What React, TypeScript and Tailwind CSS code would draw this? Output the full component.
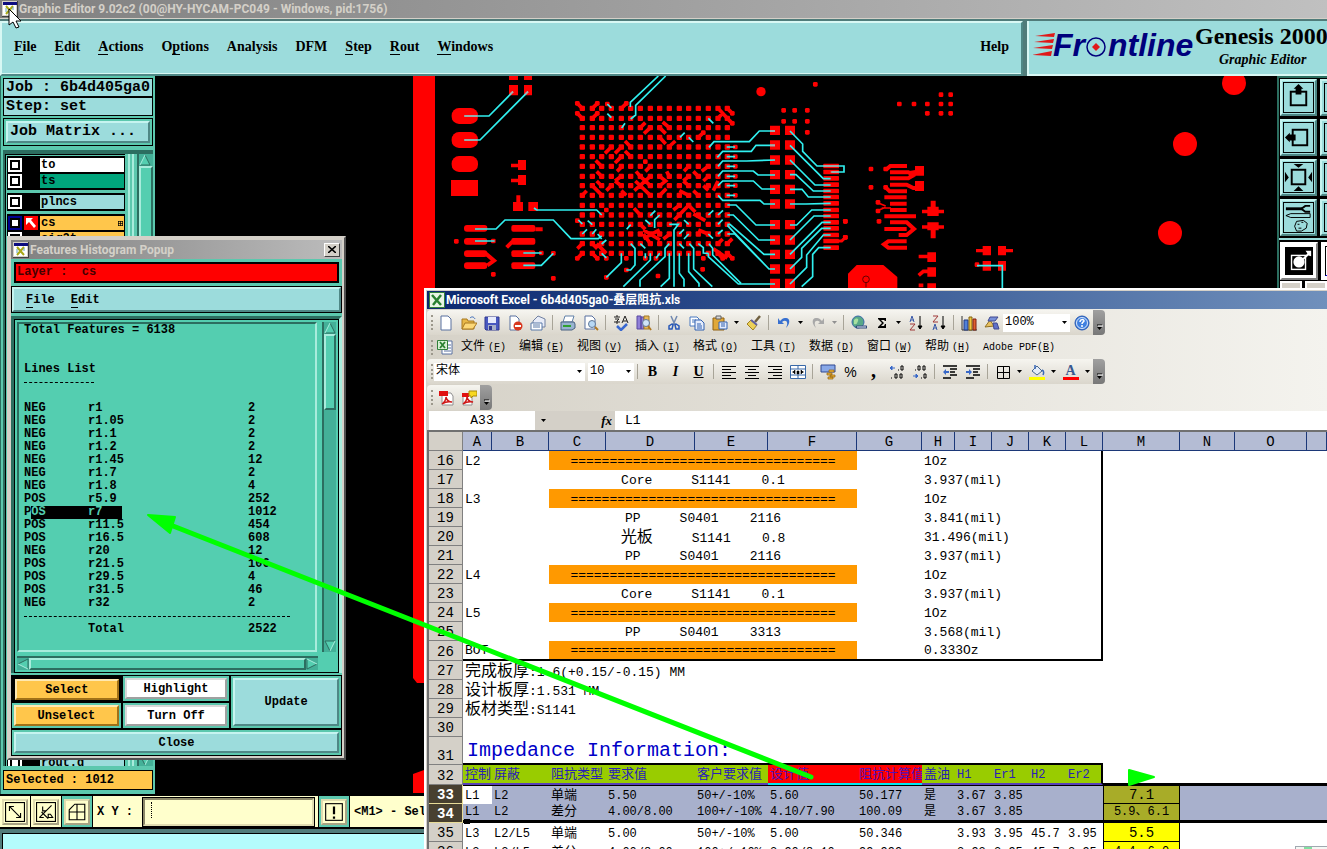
import { ReactNode } from 'react'
import clsx from 'clsx'

const mono = "font-['Liberation_Mono','Noto_Sans_CJK_SC',monospace]"
const serif = "font-['Liberation_Serif',serif]"
const caption = "font-['Roboto','Noto_Sans_CJK_SC',sans-serif]"

const raised =
  'border-2 border-t-[#c6f4f0] border-l-[#c6f4f0] border-b-[#4f8886] border-r-[#4f8886]'
const teal =
  'border-2 border-t-[#a8ecdc] border-l-[#a8ecdc] border-b-[#2c6e60] border-r-[#2c6e60]'

/* ---------- Genesis main window ---------- */

const AppIcon = () => (
  <svg width="16" height="16" viewBox="0 0 16 16" className="shrink-0">
    <rect width="16" height="16" fill="#404040" />
    <rect width="15" height="15" fill="#d4d0c8" />
    <rect x="1" y="1" width="14" height="3" fill="#0c0c80" />
    <rect x="1" y="4" width="13" height="10" fill="#fff" />
    <path d="M4 5l7 8M11 5l-7 8" stroke="#a8a818" strokeWidth="2" />
    <path d="M4 7v4M11 6v3" stroke="#60a0c0" />
  </svg>
)

const menuItems = [
  ['', 'F', 'ile'],
  ['', 'E', 'dit'],
  ['', 'A', 'ctions'],
  ['O', 'p', 'tions'],
  ['Analysis', '', ''],
  ['DFM', '', ''],
  ['', 'S', 'tep'],
  ['', 'R', 'out'],
  ['', 'W', 'indows'],
]

const Hot = ({ parts }: { parts: string[] }) => (
  <>
    {parts[0]}
    <span className="border-b border-black">{parts[1]}</span>
    {parts[2]}
  </>
)

const FrontlineLogo = () => (
  <svg width="162" height="34" viewBox="0 0 162 34" className="shrink-0">
    <g fill="#e01818">
      <path d="M2 7l20-3-1 4zM1 13l20-3-1 4zM0 19l20-3-1 4zM-1 26l20-4-1 5z" />
    </g>
    <g
      fill="#00007c"
      fontFamily="Liberation Sans"
      fontWeight="bold"
      fontStyle="italic"
      fontSize="32"
    >
      <text x="20" y="27">Fr</text>
      <text x="75" y="27">ntline</text>
    </g>
    <circle cx="63" cy="18" r="9" fill="#9cdcdc" stroke="#00007c" strokeWidth="1.500" />
    <path d="M63 14l4 4-4 4-4-4z" fill="#e01818" />
  </svg>
)

const Header = () => (
  <header className="flex h-[57px] shrink-0 border-t-2 border-[#507c7a] bg-[#507c7a]">
    <nav
      className={clsx(
        'flex flex-1 items-center gap-[18px] border-2 border-[#d8f8f4] border-r-[#4f8886] border-b-[#4f8886] bg-[#9cdcdc] px-3 pb-1 text-sm font-bold shadow-[inset_0_-1px_0_#d8f8f4]',
        serif,
      )}
    >
      {menuItems.map((item) => (
        <button key={item.join('')} className="leading-4">
          <Hot parts={item} />
        </button>
      ))}
      <button className="ml-auto leading-4">Help</button>
    </nav>
    <div className="ml-1 flex w-[300px] items-center overflow-hidden border-b-2 border-l-2 border-[#d8f8f4] bg-[#9cdcdc] pb-[3px] pl-1">
      <FrontlineLogo />
      <div className={clsx('whitespace-nowrap font-bold', serif)}>
        <div className="text-2xl leading-7">Genesis 2000</div>
        <div className="pl-6 text-sm italic">Graphic Editor</div>
      </div>
    </div>
  </header>
)

interface LayerProps {
  name: string
  color: string
  active?: boolean
}

const Layer = ({ name, color, active }: LayerProps) => (
  <label className="flex h-4 border-y border-black bg-black">
    <span
      className={clsx(
        'flex w-[14px] items-center justify-center',
        active ? 'bg-[#000090]' : 'bg-white',
      )}
    >
      <input
        type="checkbox"
        className="size-[10px] appearance-none border-2 border-black bg-white"
      />
    </span>
    <span className="w-[18px] pl-[2px]">
      {active && (
        <svg width="14" height="14" viewBox="0 0 14 14">
          <rect width="14" height="14" fill="#f00" />
          <path d="M2 2h7l-2 2 5 6-2 2-5-6-3 3z" fill="#fff" />
        </svg>
      )}
    </span>
    <span className={clsx('flex flex-1 items-center justify-between pr-px pl-px leading-3', color)}>
      {name}
      {active && (
        <svg width="5" height="5" viewBox="0 0 5 5" stroke="#000" fill="none">
          <path d="M0 .5h5M0 2.500h5M0 4.500h5M.5 0v5M2.500 0v5M4.500 0v5" strokeWidth=".7" />
        </svg>
      )}
    </span>
  </label>
)

const Sidebar = () => (
  <aside
    className={clsx(
      'flex w-[155px] shrink-0 flex-col border-l border-[#2c6e60] bg-[#5cc8ae] px-[2px] pt-[2px] font-bold',
      mono,
    )}
  >
    <div className="h-[19px] border border-black bg-[#9cdcdc] pl-[2px] text-[15px] leading-[17px]">
      Job : 6b4d405ga0
    </div>
    <div className="h-[19px] border border-black bg-[#9cdcdc] pl-[2px] text-[15px] leading-[17px]">
      Step: set
    </div>
    <div className="mt-[2px] border border-black p-[2px]">
      <button
        className={clsx('block h-[22px] w-full bg-[#9cdcdc] pl-[2px] text-left text-[15px] leading-[18px]', raised)}
      >
        Job Matrix ...
      </button>
    </div>
    <div className="mt-1 flex min-h-0 flex-1 gap-[3px] overflow-hidden border-t-4 border-l-2 border-[#2c6e60] text-xs">
      <div className="flex w-[120px] flex-col border-t border-l border-black pt-px pl-px">
        <div className="border border-black">
          <Layer name="to" color="bg-white" />
          <Layer name="ts" color="bg-[#00a57c]" />
        </div>
        <div className="mt-[3px] border border-black">
          <Layer name="plncs" color="bg-[#9cdcdc]" />
        </div>
        <div className="mt-[3px] border border-black">
          <Layer name="cs" color="bg-[#ffc64b]" active />
          <Layer name="sig2t" color="bg-[#ffc64b]" />
        </div>
        <div className="mt-auto h-3 overflow-hidden border border-b-0 border-black">
          <Layer name="rout.d" color="bg-[#9cdcdc]" />
        </div>
      </div>
      <div className="w-[6px] border-x-2 border-[#a8ecdc] bg-[#5cc8ae]" />
      <div className="flex flex-1 flex-col border-l-2 border-[#2c6e60] bg-[#44b098]">
        <ArrowHead dir="up" />
        <div className={clsx('flex-1 bg-[#54ceb0]', teal)} />
        <ArrowHead dir="down" />
      </div>
    </div>
    <div className="my-[4px] h-5 border border-black bg-[#ffc64b] pl-[2px] text-xs leading-[18px]">
      Selected : 1012
    </div>
  </aside>
)

const arrowRotation = {
  up: 'rotate-0',
  right: 'rotate-90',
  down: 'rotate-180',
  left: '-rotate-90',
}

const ArrowHead = ({ dir }: { dir: keyof typeof arrowRotation }) => (
  <svg width="12" height="12" viewBox="0 0 12 12" className={clsx('shrink-0', arrowRotation[dir])}>
    <rect width="12" height="12" fill="#44b098" />
    <path d="M6 1l5 10H1z" fill="#54ceb0" />
    <path d="M6 1l5 10H1" fill="none" stroke="#2c6e60" />
    <path d="M6 1L1 11" stroke="#a8ecdc" />
  </svg>
)

/* ---------- board drawing ---------- */

const bgaX = [517, 547, 575, 604, 634, 662, 691, 721, 749, 778, 808, 836, 865, 895, 924, 952]
const bgaY = [115, 145, 173, 202, 231, 260, 289, 319, 347, 376, 406, 435, 463, 492, 521, 550]
const padY = [181, 225, 270, 314, 358, 402, 464, 510, 553, 597, 640]
const finY = [288, 306, 325, 344, 363, 381, 400, 420, 438, 457, 475, 495, 513, 533]

const vias = [
  [139, 514], [250, 513], [250, 613], [394, 549], [430, 550], [430, 625], [589, 622],
  [649, 600], [744, 618], [878, 598], [1216, 43], [1121, 121], [1154, 121], [1192, 121],
  [1121, 154], [1154, 154], [1192, 154], [1192, 187], [1306, 454], [1306, 502],
  [502, 100], [562, 100], [592, 102], [649, 100], [502, 130], [562, 130], [967, 130],
  [967, 160], [880, 188], [706, 275], [502, 565], [562, 565], [589, 565], [649, 565],
  [706, 565], [738, 565], [880, 565], [938, 565], [967, 565], [502, 452], [589, 420],
  [976, 231], [976, 260], [976, 289], [976, 319], [976, 347], [976, 376],
]

const dogbones =
  'M502 100l15 15M547 115l15-15M502 130l15 15M547 145l15-15M634 115l15-15M924 115l28 30M952 115l15 15M924 145l14-15M952 145l15 15' +
  'M691 173l15-15M702 191l19-18M758 156l20 17M749 173l18 18M749 202l18 20M776 231l20-18M865 202l15-14M645 213l17 18M585 250l19-19M615 250l19-19M615 279l19-19M645 243l17 17' +
  'M557 271l18 18M621 304l15-15M560 304l15 15M678 304l13 15M706 304l15-15M822 304l14-15M875 304l20-15M850 304l15 15M770 304l8 15M560 333l15 15M615 333l19-14M615 333l19 14' +
  'M673 362l48-43M676 333l45 43M691 319l30 28M749 319l18 14-18 14M820 333l16-14M820 333l16 14M880 333l15-14M850 362l15 14M880 347l15 14' +
  'M530 362l-13 14M547 347l29 29M589 362l15-15M634 362l15 14M749 376l20-20M808 362l28 14M910 362l14-29M672 415l19 20M790 420l18-14M793 450l43-44M836 406l20 20M850 432l36 20' +
  'M691 463l15 15M700 480l50 30M700 505l49-25M700 492l21 29M760 507l20-15M865 480l30 12M924 521l14-14M952 521l15-15' +
  'M502 536l15-15M547 521l15 15M502 565l15-15M547 550l15 15M560 521l29 29M910 536l42 29M924 550l14 15M952 550l15 15'

const tracks =
  'M163 138H237L309 65M163 210H210L354 65M372 414l8 6H560l15 15M195 477H258l27-27H430l53 56H565l10-8M195 513h59M340 549h55M340 586h54l36-36' +
  'M745 18L661 97v14M767 18L677 106v29l-15 12M645 160l-10 14M592 102l12 12M592 131l12 12M895 145l15 15M810 202l14-14M836 202l14 14' +
  'M897 232l15-17H1018l30-32H1095M922 262l16-18H1024l14-18H1095M924 289l14-16H1010l85-3M924 319l14-16H1030l14 12H1095M924 347l14-14H1030l26 24H1095M924 376l14 15H1050l12 11H1095' +
  'M952 405h26l60 60H1095M952 435h18l76 75H1095M952 463h8l102 90H1095M952 466l125 131H1095M952 492h22l103 105M895 550v10l90 82H1095M897 521l11 14v20l85 85' +
  'M950 231h25M950 260h25M950 289h25M950 319h25M950 347h25M950 376h25' +
  'M1140 183l38 39v22l43 44H1302v18h-37M1140 226l100 100h22M1140 270l75 75h47M1140 314h18l52 49h52M1140 358h36l19 23h67M1140 402h48l74-2M1140 465h20l45-45h57M1140 510l72-72h50' +
  'M1140 553l96-96h26M1140 597l35-35v-27l60-60h27M1140 642l50-50v-37l50-60h22M1175 650l33-30v-67l18-20h36' +
  'M589 622l45-44v-28M649 600h13l13-15v-50l-13-14M640 650l81-80v-20M690 650v-20l75-70v-25l13-14M752 650l26-25v-75M792 650V480l13-17H778M808 550v60l14 18v22M836 550v55l31 35v10M838 521l13 14v62l56 53M865 521l15 12v16l15 1' +
  'M505 450l12 12M533 452l14 12M517 492l14-14M547 492l12-14M575 507l-12-15M589 510l-14 12M575 550l14 14M650 478l12-14M706 450l15 13M721 437l15-15M749 435l-15 14v25M691 521l15 14M706 550v15M738 565l11-15M895 435l15-14M924 435l15-14M924 463l14-14M895 492l14 14M924 492l14-12M822 450l14 13M808 492l14-14M822 507l14-15M808 521l14 14'

const Board = () => (
  <svg className="min-w-0 flex-1 bg-black" fill="#f00">
    <path d="M258 0h22v607h-18l-4-5zM280 690v27h-22v-19z" />
    <g transform="translate(255 -6) scale(.33333)">
      <path d="M297 18h27v12h-27zM342 18h24v12h-24zM297 45h27v31h-27zM342 45h24v31h-24zM123 330h81v48h-81zM324 270h24v30h-24zM303 281h21v11h-21zM324 315h24v30h-24zM303 326h21v11h-21zM309 396h30v27h-30zM319 376h12v20h-12zM355 396h29v27h-29z" />
      {[114, 186, 258].map((y) => (
        <rect key={y} x="125" y={y} width="79" height="48" rx="22" />
      ))}
      {[465, 504, 541, 577].map((y) => (
        <g key={y}>
          <rect x="162" y={y} width="70" height="20" rx="9" />
          <rect x="304" y={y} width="72" height="20" rx="6" />
        </g>
      ))}
      <path d="M228 551l24 21-20 14M290 532l18-18M376 478h22" stroke="#f00" strokeWidth="12" fill="none" />
      <circle cx="1053" cy="65" r="14" />
      {vias.map(([x, y]) => (
        <rect key={`${x}-${y}`} x={x - 7} y={y - 7} width="14" height="14" rx="4" />
      ))}
      {bgaY.map((y) =>
        bgaX.map((x) => (
          <rect key={`${x}-${y}`} x={x - 8} y={y - 8} width="16" height="16" rx="3" />
        )),
      )}
      <path d={dogbones} stroke="#f00" strokeWidth="11" fill="none" />
      {padY.map((y) => (
        <path key={y} d={`M1080 ${y - 14}h30v28h-30zM1125 ${y - 14}h30v28h-30z`} />
      ))}
      {finY.map((y) => (
        <rect key={y} x="1240" y={y - 7} width="47" height="14" rx="2" />
      ))}
      <path d="M1287 513h8l11-11" stroke="#f00" strokeWidth="9" fill="none" />
      <path d={tracks} stroke="#30f0f0" strokeWidth="5" fill="none" />
      <path d="M163 138h38M163 210h38M301 72l8-7M346 72l8-7M1080 183h15M1080 226h15M1240 288h46M1262 306h24" stroke="#b0a8a8" strokeWidth="5" fill="none" />
    </g>
    <g transform="translate(685 -76) scale(.33333)">
      <circle cx="1182" cy="249" r="36" />
      <circle cx="1035" cy="432" r="36" />
      <circle cx="990" cy="699" r="36" />
      {[
        [178, 312], [222, 312], [262, 312], [303, 312], [332, 312], [303, 284], [332, 284],
        [262, 340], [303, 340], [332, 340], [93, 507], [93, 562], [114, 607], [114, 633],
        [117, 664], [16, 664], [16, 712], [411, 794], [137, 507], [137, 562],
      ].map(([x, y]) => (
        <rect key={`${x}-${y}`} x={x - 7} y={y - 7} width="14" height="14" rx="4" />
      ))}
      <path
        d="M137 510l14-12h50M150 517h55l20 10M150 535h55l20-12M150 554h50l20 10h20M137 562l12 12h52M133 592h67M150 611h50M150 630h50M133 649h95M150 667h50l22 20-22 18h-24M133 687h67M200 724h-55l-13 9 13 10h56M205 520l35-6"
        stroke="#f00"
        strokeWidth="12"
        fill="none"
      />
      <path d="M117 610l20 8M117 630l20-8M125 624h28" stroke="#f00" strokeWidth="5" />
      <path d="M225 498h27v29h-27zM225 543h27v30h-27zM246 629h66v11h-66zM272 602h15v46h-15zM262 620h34v28h-34zM246 676h66v10h-66zM272 667h15v48h-15zM262 667h34v24h-34z" />
      <path d="M408 747h22v10h-22zM428 738h25v28h-25zM474 738h24v28h-24zM498 747h21v10h-21zM428 783h25v29h-25zM474 783h24v29h-24zM262 757h26v29h-26zM236 764h28v11h-28zM262 802h26v28h-26zM262 850h26v14h-26z" />
      <path d="M236 826l14-12h14M236 856h14" stroke="#f00" strokeWidth="11" fill="none" />
      <path d="M50 795h80l42 36v40H24v-50z" />
      <circle cx="78" cy="838" r="10" fill="none" stroke="#600" strokeWidth="3" />
      <path d="M78 848v14" stroke="#600" strokeWidth="3" />
      <path d="M411 797h76v70" stroke="#30f0f0" strokeWidth="5" fill="none" />
    </g>
  </svg>
)

const toolDrawings: ReactNode[] = [
  <>
    <rect x="8" y="10" width="16" height="14" fill="none" stroke="#000" strokeWidth="2" />
    <path d="M16 2l5 5h-2v6h-6V7h-2z" />
  </>,
  <>
    <rect x="10" y="8" width="15" height="16" fill="none" stroke="#000" strokeWidth="2" />
    <path d="M2 16l5-5v2h6v6H7v2z" />
  </>,
  <>
    <rect x="9" y="8" width="14" height="15" fill="none" stroke="#000" strokeWidth="2" />
    <path d="M11 2h10l-5 4zM11 30h10l-5-5zM2 10v11l4-5zM30 10v11l-4-5z" />
  </>,
  <>
    <path d="M3 7h17" stroke="#000" strokeWidth="3" />
    <path d="M28 4h-5l-4 3 4 3h5" fill="none" stroke="#000" strokeWidth="2" />
    <path d="M8 12h20v4H8l-5-2z" fill="none" stroke="#000" />
    <path
      d="M14 20l7-1 4 3-1 5-5 3h-5l-2-5zM15 23h2M19 21h2M16 27h3"
      fill="none"
      stroke="#000"
    />
  </>,
]

const ToolPalette = () => (
  <div className="flex w-[50px] shrink-0 flex-col overflow-hidden border-t-2 border-l-2 border-[#2c6e60] bg-black">
    {toolDrawings.map((drawing, i) => (
      <div key={i} className="flex h-10 w-[90px] gap-[3px] pt-px pb-[2px] pl-px">
        <button className={clsx('flex size-[37px] items-center justify-center bg-[#9cdcdc]', raised)}>
          <svg width="31" height="31" viewBox="0 0 32 32">
            <rect x=".5" y=".5" width="31" height="31" fill="none" stroke="#000" />
            {drawing}
          </svg>
        </button>
        <button className={clsx('size-[37px] bg-[#9cdcdc] p-[2px]', raised)}>
          <span className="block h-full border border-black" />
        </button>
      </div>
    ))}
    <div className="flex h-[43px] w-[90px] gap-[3px] border-t-2 border-[#9cdcdc] pt-[2px] pl-px">
      <button className="flex size-[38px] items-center justify-center border-2 border-white border-r-[#808080] border-b-[#808080] bg-white">
        <svg width="28" height="28" viewBox="0 0 30 30">
          <rect width="30" height="30" />
          <rect x="7" y="9" width="15" height="15" fill="none" stroke="#fff" strokeWidth="1.500" />
          <circle cx="15" cy="16" r="6" fill="#fff" />
          <path d="M19 12l5-5-2-3h6v6l-3-1-5 5z" fill="#fff" />
        </svg>
      </button>
      <button className="size-[38px] bg-white p-1">
        <span className="block h-full border border-black border-b-[#0000e0]" />
      </button>
    </div>
    <div className="flex flex-1 gap-[3px] pl-px">
      <div className="w-[37px] border-2 border-white bg-[#d4d0c8]" />
      <div className="w-[37px] border-2 border-white bg-[#d4d0c8]" />
    </div>
  </div>
)

const CreamButton = ({ green, children }: { green?: boolean; children: ReactNode }) => (
  <button
    className={clsx(
      'flex h-[31px] w-[31px] items-center justify-center border-r border-black',
      green ? 'bg-[#5cc8ae]' : 'bg-[#ffffcc]',
    )}
  >
    <span className="flex size-[26px] items-center justify-center border-2 border-[#e0dcb0] border-r-[#a8a484] border-b-[#a8a484] bg-[#ffffcc]">
      <svg width="20" height="20" viewBox="0 0 18 18" fill="none" stroke="#000">
        {children}
      </svg>
    </span>
  </button>
)

const CommandBar = () => (
  <footer className={clsx('shrink-0 bg-[#507c7a] font-bold', mono)}>
    <div className="flex h-[35px] items-center border-y-2 border-black bg-[#ffffcc] text-xs">
      <CreamButton>
        <rect x=".5" y=".5" width="17" height="17" />
        <path d="M4 4l10 10M4 8V4h4M14 10v4h-4" />
      </CreamButton>
      <CreamButton>
        <rect x=".5" y=".5" width="17" height="17" />
        <path d="M3 14L14 3M3 14h4M6 4v4h3M11 11h2l2 3h-4zM5 9l6 6" />
      </CreamButton>
      <CreamButton green>
        <path d="M7 2h9v14H2V7zM2 9h14M9 2v14" />
      </CreamButton>
      <label htmlFor="xy" className="w-[50px] pl-1 whitespace-pre">
        X Y :
      </label>
      <span className="relative">
        <input
          id="xy"
          className="block h-[28px] w-[171px] border-2 border-[#8c8868] border-r-[#e0dcb0] border-b-[#e0dcb0] bg-[#ffffcc] px-1 outline outline-black"
        />
        <span className="absolute top-1 left-2 h-4 border-l border-dotted border-black" />
      </span>
      <span className="ml-1 border-l border-black">
        <CreamButton green>
          <rect x="1.500" y="1.500" width="15" height="15" />
          <path d="M9 4v7M9 13v2" strokeWidth="2" />
        </CreamButton>
      </span>
      <span className="pl-1 whitespace-pre">{'<M1> - Select'}</span>
    </div>
    <div className="mt-1 ml-[2px] h-[16px] border-t border-l border-black bg-[#b4fcfc]" />
  </footer>
)

/* ---------- histogram popup ---------- */

const lineRows = [
  ['NEG', 'r1', '2'],
  ['NEG', 'r1.05', '2'],
  ['NEG', 'r1.1', '2'],
  ['NEG', 'r1.2', '2'],
  ['NEG', 'r1.45', '12'],
  ['NEG', 'r1.7', '2'],
  ['NEG', 'r1.8', '4'],
  ['POS', 'r5.9', '252'],
  ['POS', 'r7', '1012'],
  ['POS', 'r11.5', '454'],
  ['POS', 'r16.5', '608'],
  ['NEG', 'r20', '12'],
  ['POS', 'r21.5', '106'],
  ['POS', 'r29.5', '4'],
  ['POS', 'r31.5', '46'],
  ['NEG', 'r32', '2'],
]

const HistogramTable = () => (
  <table className="table-fixed">
    <colgroup>
      <col className="w-16" />
      <col className="w-40" />
      <col className="w-16" />
    </colgroup>
    <tbody>
      {lineRows.map(([sign, size, count]) => (
        <tr key={size} className="h-[13px]">
          {size === 'r7' ? (
            <>
              <td className="p-0">
                <div className="flex h-[13px]">
                  P<span className="flex-1 bg-black text-[#54ceb0]">OS</span>
                </div>
              </td>
              <td className="p-0">
                <div className="h-[13px] w-[34px] bg-black text-[#54ceb0]">r7</div>
              </td>
            </>
          ) : (
            <>
              <td className="p-0">{sign}</td>
              <td className="p-0">{size}</td>
            </>
          )}
          <td className="p-0">{count}</td>
        </tr>
      ))}
      <tr>
        <td colSpan={3} className="p-0">
          <div className="my-[6px] w-[266px] border-t border-dashed border-black" />
        </td>
      </tr>
      <tr>
        <td className="p-0" />
        <td className="p-0">Total</td>
        <td className="p-0">2522</td>
      </tr>
    </tbody>
  </table>
)

const orangeButton =
  'block h-[21px] w-full border-2 border-[#ffe8b0] border-r-[#a07018] border-b-[#a07018] bg-[#ffc64b] leading-4'
const whiteButton =
  'block h-[21px] w-full border-2 border-[#d8d8d8] border-r-[#a0a0a0] border-b-[#a0a0a0] bg-white leading-4'

const HistogramPopup = () => (
  <section className="absolute top-[236px] left-[7px] w-[339px] border-2 border-[#d4d0c8] border-r-[#505050] border-b-[#505050] bg-[#d4d0c8] p-[2px]">
    <div
      className={clsx(
        'flex h-[19px] items-center bg-linear-to-r from-[#808080] to-[#bcbcbc] pl-[2px] text-xs font-bold text-[#d4d0c8]',
        caption,
      )}
    >
      <AppIcon />
      <h2 className="pl-px">Features Histogram Popup</h2>
      <button
        aria-label="Close"
        className="mr-[2px] ml-auto flex h-[14px] w-4 items-center justify-center border border-white border-r-[#404040] border-b-[#404040] bg-[#d4d0c8]"
      >
        <svg width="8" height="7" viewBox="0 0 8 7" stroke="#000" strokeWidth="1.600">
          <path d="M0 0l8 7M8 0L0 7" />
        </svg>
      </button>
    </div>
    <div className={clsx('bg-[#5cc8ae] text-xs font-bold', mono)}>
      <div className="px-[3px] pt-[3px]">
        <div className="h-[21px] border-2 border-black bg-[#f00] pl-px leading-[17px] whitespace-pre text-[#400]">
          Layer :  cs
        </div>
      </div>
      <div className="mt-[3px] border border-black">
        <div className={clsx('flex h-[25px] items-center gap-4 bg-[#9cdcdc] pl-3', raised)}>
          <button className="leading-[14px]">
            <Hot parts={['', 'F', 'ile']} />
          </button>
          <button className="leading-[14px]">
            <Hot parts={['', 'E', 'dit']} />
          </button>
        </div>
      </div>
      <div className="mt-[3px] border-x-[3px] border-t-[3px] border-[#2c6e60] border-r-[#a8ecdc]">
        <div className="border border-black bg-[#54ceb0] p-[2px]">
          <div className="flex gap-[5px]">
            <div className="h-[330px] min-w-0 flex-1 border-2 border-[#2c6e60] border-r-[#a8ecdc] border-b-[#a8ecdc] pl-[5px] leading-[13px]">
              <p>Total Features = 6138</p>
              <p className="mt-[26px]">Lines List</p>
              <div className="mt-[6px] mb-[19px] w-[70px] border-t border-dashed border-black" />
              <HistogramTable />
            </div>
            <div className="flex w-[14px] flex-col border-l-2 border-[#2c6e60] bg-[#44b098]">
              <ArrowHead dir="up" />
              <div className={clsx('h-[76px] bg-[#54ceb0]', teal)} />
              <div className="mt-auto h-3">
                <ArrowHead dir="down" />
              </div>
            </div>
          </div>
          <div className="mt-1 mr-[18px] flex h-[14px] border-t-2 border-[#2c6e60] bg-[#44b098]">
            <ArrowHead dir="left" />
            <div className={clsx('flex-1 bg-[#54ceb0]', teal)} />
            <ArrowHead dir="right" />
          </div>
        </div>
      </div>
      <div className="mt-[2px] grid grid-cols-3 border border-black">
        <div className="border-2 border-black bg-black p-px">
          <button className={orangeButton}>Select</button>
        </div>
        <div className="border-r-2 border-b-2 border-l border-black p-[2px]">
          <button className={whiteButton}>Highlight</button>
        </div>
        <div className="row-span-2 p-[2px]">
          <button className={clsx('h-full w-full bg-[#9cdcdc]', raised)}>Update</button>
        </div>
        <div className="border-r border-black p-[2px]">
          <button className={orangeButton}>Unselect</button>
        </div>
        <div className="border-r-2 border-l border-black p-[2px]">
          <button className={whiteButton}>Turn Off</button>
        </div>
        <div className="col-span-3 border-t-2 border-black p-[2px]">
          <button className={clsx('block h-[21px] w-full bg-[#9cdcdc] leading-4', raised)}>Close</button>
        </div>
      </div>
    </div>
  </section>
)

/* ---------- Excel window ---------- */

const icons: Record<string, ReactNode> = {
  New: <path d="M3 1h7l3 3v11H3z" fill="#fff" stroke="#5870a0" />,
  Open: (
    <>
      <path d="M1 4h5l1 2h6v8H1z" fill="#e8b848" stroke="#a87820" />
      <path d="M4 8h12l-4 6H1z" fill="#fcd878" stroke="#a87820" />
      <path d="M9 3c2-2 4-1 5 1" fill="none" stroke="#3868b8" />
    </>
  ),
  Save: (
    <>
      <path d="M1 2h14v13H2l-1-1z" fill="#4858c0" stroke="#303890" />
      <path d="M4 2h8v6H4z" fill="#e8ecfc" />
      <path d="M4 10h8v5H4z" fill="#a8b0c8" />
      <path d="M5 11h3v4H5z" fill="#303890" />
    </>
  ),
  Permission: (
    <>
      <path d="M3 1h6l3 3v11H3z" fill="#fff" stroke="#5870a0" />
      <circle cx="11" cy="11" r="4.500" fill="#d83820" />
      <path d="M8 11h6" stroke="#fff" strokeWidth="2" />
    </>
  ),
  Mail: (
    <>
      <path d="M3 6l5-5 7 3v8H3z" fill="#e8ecf8" stroke="#7080a0" />
      <path d="M1 8h11v7H1zM3 10h7M3 12h7" fill="#fff" stroke="#5878a8" />
    </>
  ),
  Print: (
    <>
      <path d="M5 1h9l-2 6H3z" fill="#fff" stroke="#6080a8" />
      <path d="M1 7h13l1 2v4l-3 2H1z" fill="#98b4d0" stroke="#486080" />
      <path d="M3 11h8" stroke="#30a030" strokeWidth="2" />
    </>
  ),
  Preview: (
    <>
      <path d="M2 1h7l3 3v10H2z" fill="#fff" stroke="#5870a0" />
      <circle cx="9" cy="9" r="3.500" fill="#b8d8f4" stroke="#607898" />
      <path d="M12 12l3 3" stroke="#b07820" strokeWidth="2" />
    </>
  ),
  Spelling: (
    <>
      <path d="M1 2h6M4 0v2M2 4h4L4 6v3M1 7h6M9 8l3-7 3 7M10 6h4" fill="none" stroke="#202020" />
      <path d="M4 11l4 4 6-6" fill="none" stroke="#3868d0" strokeWidth="2.500" />
    </>
  ),
  Research: (
    <>
      <path d="M1 1h4v13H1zM5 2h3v12H5z" fill="#9080d8" stroke="#5848a0" />
      <path d="M8 1h5v13H8z" fill="#e8b858" stroke="#a07828" />
      <circle cx="10" cy="8" r="3.500" fill="#d0e4f8" stroke="#607898" />
      <path d="M12 11l3 4" stroke="#b07820" strokeWidth="2" />
    </>
  ),
  Cut: (
    <>
      <path d="M5 1l4 9M11 1L7 10" stroke="#7088b0" strokeWidth="1.500" />
      <path d="M6 9l-3 2v3h3l1-4zM10 9l3 2v3h-3l-1-4z" fill="none" stroke="#2858b8" strokeWidth="1.500" />
    </>
  ),
  Copy: (
    <>
      <path d="M1 2h7l2 2v7H1zM3 5h4M3 7h4" fill="#fff" stroke="#4878c0" />
      <path d="M6 5h6l3 3v7H6zM8 9h4M8 11h5M8 13h5" fill="#e4ecfc" stroke="#3060b0" />
    </>
  ),
  Paste: (
    <>
      <path d="M1 3h11v12H1z" fill="#e0a838" stroke="#906010" />
      <path d="M4 1h5v3H4z" fill="#d8d8d8" stroke="#606060" />
      <path d="M7 7h8v7H7zM9 9h4M9 11h4" fill="#e4ecfc" stroke="#3060b0" />
    </>
  ),
  Painter: (
    <>
      <path d="M14 1l-5 6" stroke="#706040" strokeWidth="2.500" />
      <path d="M5 5l6 5-4 5-6-6z" fill="#ecd058" stroke="#a08020" />
      <path d="M5 5l6 5" stroke="#6060a0" strokeWidth="2" />
    </>
  ),
  Undo: <path d="M2 3v6h6L6 7c4-3 7 0 4 6 5-5 4-11-1-10-2 0-3 1-5 3z" fill="#3870d0" />,
  Redo: <path d="M14 3v6H8l2-2C6 4 3 7 6 13 1 8 2 2 7 3c2 0 3 1 5 3z" fill="#a8a8a8" />,
  Link: (
    <>
      <circle cx="7" cy="7" r="6" fill="#58a888" stroke="#3868a8" />
      <path d="M3 5c3-3 5-1 4 1s-1 4-4 3z" fill="#a8e0a0" />
      <path d="M6 12h5M10 12h5" stroke="#304878" strokeWidth="3" strokeLinecap="round" />
      <path d="M6 12h9" stroke="#e0e8f8" />
    </>
  ),
  Sum: <path d="M4 3h8v3h-1l-1-1H7l3 3-3 3h3l1-2h1v4H4v-1l4-4-4-4z" fill="#000" />,
  Ascending: (
    <>
      <path d="M2 7l2-6 2 6M3 5h3" fill="none" stroke="#3858a8" />
      <path d="M2 9h5l-5 6h5" fill="none" stroke="#a03838" />
      <path d="M12 1v12M10 11l2 3 2-3z" stroke="#000" />
    </>
  ),
  Descending: (
    <>
      <path d="M2 1h5L2 7h5" fill="none" stroke="#a03838" />
      <path d="M2 15l2-6 2 6M3 13h3" fill="none" stroke="#3858a8" />
      <path d="M12 1v12M10 11l2 3 2-3z" stroke="#000" />
    </>
  ),
  Chart: (
    <>
      <path d="M1 1v14h15" fill="none" stroke="#303030" />
      <path d="M3 5h4v10H3z" fill="#5080d8" stroke="#203880" />
      <path d="M8 2h3v13H8z" fill="#f0c840" stroke="#806010" />
      <path d="M12 4h3v11h-3z" fill="#e06030" stroke="#802010" />
    </>
  ),
  Drawing: (
    <>
      <path d="M1 12l5-7 4 6z" fill="#e8c060" stroke="#907020" />
      <path d="M6 2h8l-3 4H4z" fill="#7890d8" stroke="#404890" />
      <path d="M9 8h4l2 6h-5z" fill="#6070c8" stroke="#404890" />
    </>
  ),
  Help: (
    <>
      <circle cx="8" cy="8" r="7" fill="#4080e0" stroke="#2858b0" />
      <circle cx="8" cy="8" r="5.500" fill="none" stroke="#fff" strokeWidth=".8" />
      <path d="M6 7c0-3 4-3 4-1 0 1-2 1-2 3M8 10v2" fill="none" stroke="#fff" strokeWidth="1.500" />
    </>
  ),
  Left: <path d="M1 2.500h14M1 5.500h9M1 8.500h14M1 11.500h9M1 14.500h14" stroke="#000" />,
  Center: <path d="M1 2.500h14M4 5.500h8M1 8.500h14M4 11.500h8M1 14.500h14" stroke="#000" />,
  Right: <path d="M1 2.500h14M6 5.500h9M1 8.500h14M6 11.500h9M1 14.500h14" stroke="#000" />,
  Merge: (
    <>
      <path d="M.5 1.500h15v13H.5zM.5 5h15M.5 11h15M8 1v4M8 11v4" fill="#fff" stroke="#3868a8" />
      <path d="M2 8h3M11 8h3M5 6v4l-2-2zM11 6v4l2-2zM7 7h2v3H7z" stroke="#000" strokeWidth=".6" />
    </>
  ),
  Currency: (
    <>
      <path d="M1 1h14v7H1z" fill="#88a8e8" stroke="#304890" />
      <path d="M9 6h5v2H9zM7 9h5v2H7zM10 11h5v2h-5zM8 13h5v2H8z" fill="#f0b838" stroke="#906010" strokeWidth=".7" />
    </>
  ),
  Increase: (
    <>
      <path d="M1 4h5M1 4l2-2v4z" stroke="#3868c8" fill="#3868c8" />
      <path d="M9 6h1M12 2h2v4h-2zM2 14h1M6 10h2v4H6zM11 10h2v4h-2z" fill="none" stroke="#000" />
    </>
  ),
  Decrease: (
    <>
      <path d="M1 12h5M6 12l-2-2v4z" stroke="#3868c8" fill="#3868c8" />
      <path d="M3 6h1M6 2h2v4H6zM11 2h2v4h-2zM9 14h1M12 10h2v4h-2z" fill="none" stroke="#000" />
    </>
  ),
  Outdent: (
    <>
      <path d="M1 2h14M8 5h7M8 8h5M8 11h7M1 14h8" stroke="#000" strokeWidth="1.500" />
      <path d="M1 8l3-3v2h3v2H4v2z" fill="#3868c8" />
    </>
  ),
  Indent: (
    <>
      <path d="M1 2h14M8 5h7M8 8h5M8 11h7M1 14h8" stroke="#000" strokeWidth="1.500" />
      <path d="M7 8L4 5v2H1v2h3v2z" fill="#3868c8" />
    </>
  ),
  Borders: <path d="M2.500 2.500h12v12h-12zM8.500 2v12M2 8.500h12" fill="none" stroke="#000" />,
  Fill: (
    <>
      <path d="M3 7l5-5 5 5-5 4z" fill="#e4ecf8" stroke="#486890" />
      <path d="M6 5V1M13 6c2 1 2 3 1 5" fill="none" stroke="#3868b8" strokeWidth="1.500" />
      <path d="M0 13h16v3H0z" fill="#ff0" />
    </>
  ),
  Pdf: (
    <>
      <path d="M4 3h9l2 3v9H4z" fill="#fff" stroke="#909090" />
      <path d="M1 1h9v5H1z" fill="#e01010" />
      <path d="M4 14c4-3 4-5 4-7 1 4 3 5 6 5-4-1-7 0-10 2" fill="none" stroke="#d01818" strokeWidth="1.500" />
    </>
  ),
  Review: (
    <>
      <path d="M2 5h9v10H2z" fill="#fff" stroke="#909090" />
      <path d="M1 3h7v4H1z" fill="#e01010" />
      <path d="M2 14c4-3 4-5 4-7 1 4 3 5 6 5-4-1-7 0-10 2" fill="none" stroke="#d01818" strokeWidth="1.500" />
      <path d="M8 1h8v5h-4l-2 2V6H8z" fill="#f8d820" stroke="#a88808" />
    </>
  ),
  Excel: (
    <>
      <path d="M.5 .5h15v15H.5z" fill="#e8f4e4" stroke="#308038" />
      <path d="M3 3l9 10M12 3L4 13" stroke="#288030" strokeWidth="2.500" />
    </>
  ),
  Book: (
    <>
      <path d="M5 2h10v13H5zM7 6h7M7 9h7M7 12h7" fill="#fff" stroke="#5870a0" />
      <path d="M.5 1.500h10v9H.5z" fill="#d8f0d4" stroke="#308038" />
      <path d="M3 3l5 6M8 3L3 9" stroke="#288030" strokeWidth="1.800" />
    </>
  ),
}

const Icon = ({ name }: { name: string }) => (
  <svg width="16" height="16" viewBox="0 0 16 16" className="shrink-0">
    {icons[name]}
  </svg>
)

const Tool = ({ name, children }: { name: string; children?: ReactNode }) => (
  <button aria-label={name} className="flex w-[23px] shrink-0 items-center justify-center">
    {children ?? <Icon name={name} />}
  </button>
)

const Drop = ({ faded }: { faded?: boolean }) => (
  <svg width="11" height="4" viewBox="0 0 11 4" className="shrink-0">
    <path d="M3 0h5L5.500 3z" fill={faded ? '#909090' : '#000'} />
  </svg>
)

const Sep = () => <span className="mx-[3px] h-[15px] w-px shrink-0 bg-[#a8a498]" />

const Grip = () => (
  <span className="mr-px ml-[4px] h-[15px] w-0 shrink-0 border-l-2 border-dotted border-[#9c988c]" />
)

const EndCap = () => (
  <span className="flex h-full w-3 shrink-0 items-end justify-center rounded-r bg-linear-to-b from-[#a0a0a0] to-[#787878] pb-1">
    <svg width="7" height="7" viewBox="0 0 7 7">
      <path d="M1 1h5" stroke="#000" />
      <path d="M1 3h5L3.500 6z" />
      <path d="M2 2h5" stroke="#fff" />
    </svg>
  </span>
)

interface ComboProps {
  label: string
  value: string
  className: string
}

const Combo = ({ label, value, className }: ComboProps) => (
  <span className={clsx('flex h-[18px] shrink-0 items-center bg-white', className)}>
    <select aria-label={label} className="min-w-0 flex-1 appearance-none bg-white pb-[2px] pl-[2px] text-xs leading-4">
      <option>{value}</option>
    </select>
    <Drop />
  </span>
)

const bar =
  'flex h-[25px] w-fit items-center rounded bg-linear-to-b from-[#f6f5f0] to-[#dad6cc]'

const excelMenus = [
  ['文件', 'F'],
  ['编辑', 'E'],
  ['视图', 'V'],
  ['插入', 'I'],
  ['格式', 'O'],
  ['工具', 'T'],
  ['数据', 'D'],
  ['窗口', 'W'],
  ['帮助', 'H'],
]

const Toolbars = () => (
  <div className="bg-linear-to-r from-[#d6d2c8] to-[#f4f3ee] pt-px pb-px">
    <div className={bar}>
      <Grip />
      <Tool name="New" />
      <Tool name="Open" />
      <Tool name="Save" />
      <Tool name="Permission" />
      <Tool name="Mail" />
      <Sep />
      <Tool name="Print" />
      <Tool name="Preview" />
      <Sep />
      <Tool name="Spelling" />
      <Tool name="Research" />
      <Sep />
      <Tool name="Cut" />
      <Tool name="Copy" />
      <Tool name="Paste" />
      <Drop />
      <Tool name="Painter" />
      <Sep />
      <Tool name="Undo" />
      <Drop />
      <Tool name="Redo" />
      <Drop faded />
      <Sep />
      <Tool name="Link" />
      <Tool name="Sum" />
      <Drop />
      <Tool name="Ascending" />
      <Tool name="Descending" />
      <Sep />
      <Tool name="Chart" />
      <Tool name="Drawing" />
      <Combo label="Zoom" value="100%" className="w-[67px]" />
      <Tool name="Help" />
      <EndCap />
    </div>
    <div className="flex h-6 items-center text-[10px]">
      <Grip />
      <span className="w-[27px] pl-[3px]">
        <Icon name="Book" />
      </span>
      {excelMenus.map(([name, key]) => (
        <button key={key} className="flex w-[58px] items-center gap-[3px] whitespace-nowrap">
          <span className="text-xs">{name}</span>
          <span>
            (<u>{key}</u>)
          </span>
        </button>
      ))}
      <button className="whitespace-nowrap">
        Adobe PDF(<u>B</u>)
      </button>
    </div>
    <div className={bar}>
      <Grip />
      <Combo label="Font" value="宋体" className="w-[151px]" />
      <Combo label="Size" value="10" className="ml-[3px] w-[46px]" />
      <Sep />
      <Tool name="Bold">
        <b className={clsx('text-sm', serif)}>B</b>
      </Tool>
      <Tool name="Italic">
        <b className={clsx('text-sm italic', serif)}>I</b>
      </Tool>
      <Tool name="Underline">
        <b className={clsx('text-sm underline', serif)}>U</b>
      </Tool>
      <Sep />
      <Tool name="Left" />
      <Tool name="Center" />
      <Tool name="Right" />
      <Tool name="Merge" />
      <Sep />
      <Tool name="Currency" />
      <Tool name="Percent">
        <span className="font-['Liberation_Sans'] text-sm">%</span>
      </Tool>
      <Tool name="Comma">
        <b className={clsx('pb-1 text-xl leading-3', serif)}>,</b>
      </Tool>
      <Tool name="Increase" />
      <Tool name="Decrease" />
      <Sep />
      <Tool name="Outdent" />
      <Tool name="Indent" />
      <Sep />
      <Tool name="Borders" />
      <Drop />
      <Tool name="Fill" />
      <Drop />
      <Tool name="Font color">
        <b className={clsx('w-4 border-b-3 border-[#f00] text-sm leading-[13px] text-[#385890]', serif)}>A</b>
      </Tool>
      <Drop />
      <EndCap />
    </div>
    <div className={clsx('mt-px', bar)}>
      <Grip />
      <Tool name="Pdf" />
      <Tool name="Review" />
      <EndCap />
    </div>
  </div>
)

const columns = [
  ['A', 'w-[29px]'],
  ['B', 'w-[57px]'],
  ['C', 'w-[57px]'],
  ['D', 'w-[89px]'],
  ['E', 'w-[73px]'],
  ['F', 'w-[89px]'],
  ['G', 'w-[65px]'],
  ['H', 'w-[33px]'],
  ['I', 'w-[37px]'],
  ['J', 'w-[37px]'],
  ['K', 'w-[37px]'],
  ['L', 'w-[37px]'],
  ['M', 'w-[77px]'],
  ['N', 'w-[55px]'],
  ['O', 'w-[72px]'],
  ['', ''],
]

const copper = '='.repeat(34)
const core = 'Core     S1141    0.1'

// row number, layer, material (null = copper), thickness
const stackup: [number, string, ReactNode, string][] = [
  [16, 'L2', null, '1Oz'],
  [17, '', core, '3.937(mil)'],
  [18, 'L3', null, '1Oz'],
  [19, '', 'PP     S0401    2116', '3.841(mil)'],
  [20, '', <><span className="text-base leading-4">光板</span>{'     S1141    0.8'}</>, '31.496(mil)'],
  [21, '', 'PP     S0401    2116', '3.937(mil)'],
  [22, 'L4', null, '1Oz'],
  [23, '', core, '3.937(mil)'],
  [24, 'L5', null, '1Oz'],
  [25, '', 'PP     S0401    3313', '3.568(mil)'],
  [26, 'BOT', null, '0.333Oz'],
]

const notes = [
  [27, '完成板厚', ':1.6(+0.15/-0.15) MM'],
  [28, '设计板厚', ':1.531 MM'],
  [29, '板材类型', ':S1141'],
  [30, '', ''],
]

const impedanceHead = [
  '控制', '屏蔽', '阻抗类型', '要求值', '客户要求值', '设计值', '阻抗计算值', '盖油', 'H1', 'Er1', 'H2', 'Er2',
]

const impedance = [
  ['33', 'L1', 'L2', '单端', '5.50', '50+/-10%', '5.60', '50.177', '是', '3.67', '3.85', '', '', '7.1'],
  ['34', 'L1', 'L2', '差分', '4.00/8.00', '100+/-10%', '4.10/7.90', '100.09', '是', '3.67', '3.85', '', '', '5.9、6.1'],
  ['35', 'L3', 'L2/L5', '单端', '5.00', '50+/-10%', '5.00', '50.346', '', '3.93', '3.95', '45.7', '3.95', '5.5'],
  ['36', 'L3', 'L2/L5', '差分', '4.00/8.00', '100+/-10%', '3.90/8.10', '99.999', '', '3.93', '3.95', '45.7', '3.95', '4.4、6.0'],
]

const RowHead = ({ n, dark }: { n: number | string; dark?: boolean }) => (
  <th
    scope="row"
    className={clsx(
      'border-r border-b p-0 text-center align-bottom text-sm leading-4',
      dark
        ? 'border-[#e8dc98] bg-[#484030] font-bold text-white'
        : 'border-[#808080] bg-[#d4d0c8] font-normal text-black',
    )}
  >
    {n}
  </th>
)

const Cell = ({ children, className, span }: { children?: ReactNode; className?: string; span?: number }) => (
  <td colSpan={span} className={clsx('p-0 align-bottom', className)}>
    <div className="h-4 leading-4 whitespace-pre">{children}</div>
  </td>
)

const Sheet = () => (
  <div className="min-h-0 flex-1 overflow-hidden border-t-2 border-l-2 border-[#707070] bg-white">
    <table className="w-full table-fixed border-separate border-spacing-0 text-[13px]">
      <colgroup>
        <col className="w-[34px]" />
        {columns.map(([name, width]) => (
          <col key={name} className={width} />
        ))}
      </colgroup>
      <thead>
        <tr className="h-[19px]">
          <th className="border-r border-b border-[#808080] bg-[#d4d0c8] p-0" />
          {columns.map(([name]) => (
            <th
              key={name}
              className="border-r border-b border-[#1c3878] bg-[#b4bcd4] p-0 align-bottom text-sm leading-4 font-normal"
            >
              {name}
            </th>
          ))}
        </tr>
      </thead>
      <tbody>
        {stackup.map(([n, layer, material, thickness]) => {
          const last = n === 26
          const edge = last && 'border-b-2 border-black'
          return (
            <tr key={n} className={last ? 'h-5' : 'h-[19px]'}>
              <RowHead n={n} />
              <Cell span={2} className={clsx('pl-[2px]', edge)}>{layer}</Cell>
              <Cell span={4} className={clsx('text-center', !material && 'bg-[#ff9900]', edge)}>
                {material ?? copper}
              </Cell>
              <Cell className={clsx(edge)} />
              <Cell span={5} className={clsx('border-r-2 border-black pl-[2px]', edge)}>{thickness}</Cell>
              <td colSpan={4} className="p-0" />
            </tr>
          )
        })}
        {notes.map(([n, label, text]) => (
          <tr key={n} className="h-[19px]">
            <RowHead n={n} />
            <Cell span={16} className="pl-[2px]">
              <span className="text-base leading-4">{label}</span>
              {text}
            </Cell>
          </tr>
        ))}
        <tr className="h-7">
          <RowHead n={31} />
          <td colSpan={12} className="border-b-2 border-black p-0 pl-1 align-bottom text-xl leading-6 text-[#0000c8]">
            Impedance Information:
          </td>
          <td colSpan={4} className="p-0" />
        </tr>
        <tr className="h-5 text-[13px] text-[#2820b8]">
          <RowHead n={32} />
          {impedanceHead.map((name, i) => (
            <Cell
              key={name}
              className={clsx(
                'overflow-hidden border-b-2 pl-[2px]',
                i === 5 || i === 6
                  ? 'border-[#00e8f0] bg-[#f00] text-[#5010b8]'
                  : 'border-[#5840b8] bg-[#99cc00]',
                i === 11 && 'border-r-2 border-r-black',
                i > 7 && 'text-xs',
              )}
            >
              {name}
            </Cell>
          ))}
          <td colSpan={4} className="border-b-2 border-black p-0" />
        </tr>
        {impedance.map(([n, ...cells]) => {
          const picked = n === '33' || n === '34'
          const edge = n === '34' ? 'border-b-3 border-black' : n === '33' && 'border-t border-t-black'
          return (
            <tr key={n} className="h-[19px] text-xs">
              <RowHead n={n} dark={picked} />
              {cells.map((text, i) => (
                <Cell
                  key={i}
                  className={clsx(
                    i < 12 && 'pl-[2px]',
                    i === 12 && 'border-x border-b border-black text-center',
                    i === 12 && (picked ? 'bg-[#a8ac28]' : 'bg-[#ff0]'),
                    i === 12 && text.length < 4 && 'text-sm',
                    picked && i < 12 && !(n === '33' && i === 0) && 'bg-[#a8b0cc]',
                    edge,
                  )}
                >
                  <span className={clsx(i === 2 && 'text-[13px]')}>{text}</span>
                </Cell>
              ))}
              <td colSpan={3} className={clsx('p-0', picked && 'bg-[#a8b0cc]', edge)} />
            </tr>
          )
        })}
      </tbody>
    </table>
  </div>
)

const ExcelWindow = () => (
  <section
    className={clsx(
      'absolute top-[288px] right-0 bottom-0 left-[424px] flex flex-col overflow-hidden border-t-2 border-l-2 border-white bg-[#d4d0c8] pt-px pl-px',
      mono,
    )}
  >
    <div
      className={clsx(
        'flex h-[18px] shrink-0 items-center gap-px bg-linear-to-r from-[#0c2870] to-[#7090bc] pl-[2px] text-xs font-bold text-white',
        caption,
      )}
    >
      <Icon name="Excel" />
      <h1 className="leading-4">Microsoft Excel - 6b4d405ga0-叠层阻抗.xls</h1>
    </div>
    <Toolbars />
    <div className="ml-[2px] flex h-[19px] shrink-0 items-center text-[13px]">
      <input aria-label="Name box" defaultValue="A33" className="h-full w-[106px] bg-white text-center" />
      <span className="flex w-[80px] items-center justify-between px-[3px]">
        <Drop />
        <i className={clsx('font-bold', serif)}>fx</i>
      </span>
      <input aria-label="Formula" defaultValue="L1" className="h-full flex-1 bg-white pl-[10px]" />
    </div>
    <Sheet />
    <div className="absolute right-0 bottom-0 h-[3px] w-8 border-t border-l border-[#a0a8b0] bg-[#f4f8f4]">
      <div className="ml-2 h-full w-2 bg-[#80e0a0]" />
    </div>
  </section>
)

const Annotations = () => (
  <svg className="pointer-events-none absolute inset-0 h-full w-full" fill="#00ff00">
    <path d="M168 524L811 777" stroke="#00ff00" strokeWidth="5" strokeLinecap="round" />
    <path d="M148 515l27 2-5 16z" stroke="#00ff00" strokeWidth="2" strokeLinejoin="round" />
    <path d="M1129 770l25 7-25 8z" stroke="#00ff00" strokeWidth="2" strokeLinejoin="round" />
    <rect x="464" y="819" width="6" height="5" fill="#000" />
    <path
      d="M9 9v16l4-3 3 6 3-1-3-6h5z"
      fill="#fff"
      stroke="#000"
      strokeLinejoin="round"
    />
  </svg>
)

const App = () => (
  <main className="relative flex h-screen flex-col overflow-hidden bg-black text-black">
    <div
      className={clsx(
        'flex h-[19px] shrink-0 items-center border-b border-[#d4d0c8] bg-linear-to-r from-[#808080] to-[#c0c0c0] pl-[2px] text-xs font-bold text-[#d4d0c8]',
        caption,
      )}
    >
      <AppIcon />
      <h1 className="pl-px">Graphic Editor 9.02c2 (00@HY-HYCAM-PC049 - Windows, pid:1756)</h1>
    </div>
    <Header />
    <div className="flex min-h-0 flex-1">
      <Sidebar />
      <Board />
      <ToolPalette />
    </div>
    <CommandBar />
    <HistogramPopup />
    <ExcelWindow />
    <Annotations />
  </main>
)

export default App
